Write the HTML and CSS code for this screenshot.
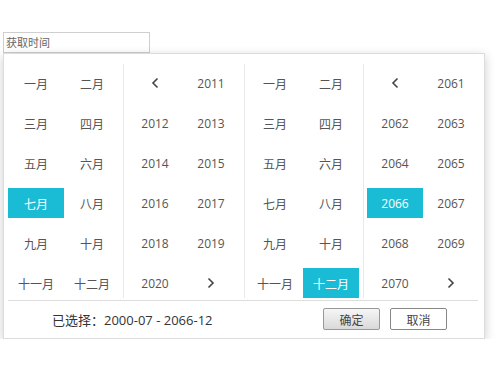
FILE: index.html
```html
<!DOCTYPE html>
<html>
<head>
<meta charset="utf-8">
<link rel="stylesheet" href="styles.css">
</head>
<body>
<div class="page">
  <div class="input">获取时间</div>
  <div class="picker">
    <div class="panels">
      <div class="grid months first">
        <div class="cell">一月</div><div class="cell">二月</div>
        <div class="cell">三月</div><div class="cell">四月</div>
        <div class="cell">五月</div><div class="cell">六月</div>
        <div class="cell active">七月</div><div class="cell">八月</div>
        <div class="cell">九月</div><div class="cell">十月</div>
        <div class="cell">十一月</div><div class="cell">十二月</div>
      </div>
      <div class="grid years sep sep-a">
        <div class="cell"><svg class="chev" width="8" height="12" viewBox="0 0 8 12"><path d="M6.5 1.5 L2 6 L6.5 10.5" fill="none" stroke="#444" stroke-width="1.6"/></svg></div><div class="cell">2011</div>
        <div class="cell">2012</div><div class="cell">2013</div>
        <div class="cell">2014</div><div class="cell">2015</div>
        <div class="cell">2016</div><div class="cell">2017</div>
        <div class="cell">2018</div><div class="cell">2019</div>
        <div class="cell">2020</div><div class="cell"><svg class="chev" width="8" height="12" viewBox="0 0 8 12"><path d="M1.5 1.5 L6 6 L1.5 10.5" fill="none" stroke="#444" stroke-width="1.6"/></svg></div>
      </div>
      <div class="grid months sep sep-b">
        <div class="cell">一月</div><div class="cell">二月</div>
        <div class="cell">三月</div><div class="cell">四月</div>
        <div class="cell">五月</div><div class="cell">六月</div>
        <div class="cell">七月</div><div class="cell">八月</div>
        <div class="cell">九月</div><div class="cell">十月</div>
        <div class="cell">十一月</div><div class="cell active">十二月</div>
      </div>
      <div class="grid years sep sep-c">
        <div class="cell"><svg class="chev" width="8" height="12" viewBox="0 0 8 12"><path d="M6.5 1.5 L2 6 L6.5 10.5" fill="none" stroke="#444" stroke-width="1.6"/></svg></div><div class="cell">2061</div>
        <div class="cell">2062</div><div class="cell">2063</div>
        <div class="cell">2064</div><div class="cell">2065</div>
        <div class="cell active">2066</div><div class="cell">2067</div>
        <div class="cell">2068</div><div class="cell">2069</div>
        <div class="cell">2070</div><div class="cell"><svg class="chev" width="8" height="12" viewBox="0 0 8 12"><path d="M1.5 1.5 L6 6 L1.5 10.5" fill="none" stroke="#444" stroke-width="1.6"/></svg></div>
      </div>
    </div>
    <div class="footer">
      <div class="selected">已选择：2000-07 - 2066-12</div>
      <div class="buttons">
        <button class="btn ok">确定</button>
        <button class="btn cancel">取消</button>
      </div>
    </div>
  </div>
</div>
</body>
</html>
```
FILE: styles.css
```css
html, body {
  margin: 0;
  padding: 0;
  background: #ffffff;
}
body {
  font-family: "Open Sans", "Noto Sans CJK SC", sans-serif;
  color: #555;
}
.page {
  padding: 32px 0 0 3px;
}
.input {
  box-sizing: border-box;
  width: 147px;
  height: 21px;
  border: 1px solid #cfcfcf;
  font-family: "Noto Sans CJK SC", sans-serif;
  font-size: 11px;
  line-height: 19px;
  padding-left: 2px;
  color: #666;
}
.picker {
  box-sizing: border-box;
  width: 482px;
  border: 1px solid #dcdcdc;
  background: #fff;
  box-shadow: 0 3px 10px rgba(0, 0, 0, 0.2);
  padding-top: 10px;
}
.panels {
  display: flex;
  align-items: flex-start;
}
.grid {
  display: grid;
  grid-template-columns: 56px 56px;
  grid-auto-rows: 30px;
  row-gap: 10px;
  padding-top: 4px;
}
.first {
  margin-left: 4px;
}
.sep {
  border-left: 1px solid #e9e9e9;
}
.sep-a {
  margin-left: 3px;
  padding-left: 3px;
}
.sep-b {
  margin-left: 5px;
  padding-left: 2px;
}
.sep-c {
  margin-left: 4px;
  padding-left: 3px;
}
.cell {
  display: flex;
  align-items: center;
  justify-content: center;
  font-size: 12px;
  color: #555;
}
.months .cell {
  font-family: "Noto Sans CJK SC", sans-serif;
}
.years .cell {
  font-family: "Open Sans", sans-serif;
}
.cell.active {
  background: #1abcd5;
  color: #fff;
}
.footer {
  margin: 2px 6px 0 4px;
  border-top: 1px solid #dedede;
  padding: 7px 31px 8px 44px;
  display: flex;
  align-items: center;
  justify-content: space-between;
}
.selected {
  font-family: "Open Sans", "Noto Sans CJK SC", sans-serif;
  font-size: 13px;
  color: #333;
}
.buttons {
  display: flex;
  gap: 10px;
}
.btn {
  box-sizing: border-box;
  width: 57px;
  height: 22px;
  padding: 0;
  font-family: "Noto Sans CJK SC", sans-serif;
  font-size: 12px;
  color: #444;
  border-radius: 2px;
}
.ok {
  border: 1px solid #999;
  background: linear-gradient(#f6f6f6, #d9d9d9);
}
.cancel {
  border: 1px solid #888;
  background: #fff;
}
```
